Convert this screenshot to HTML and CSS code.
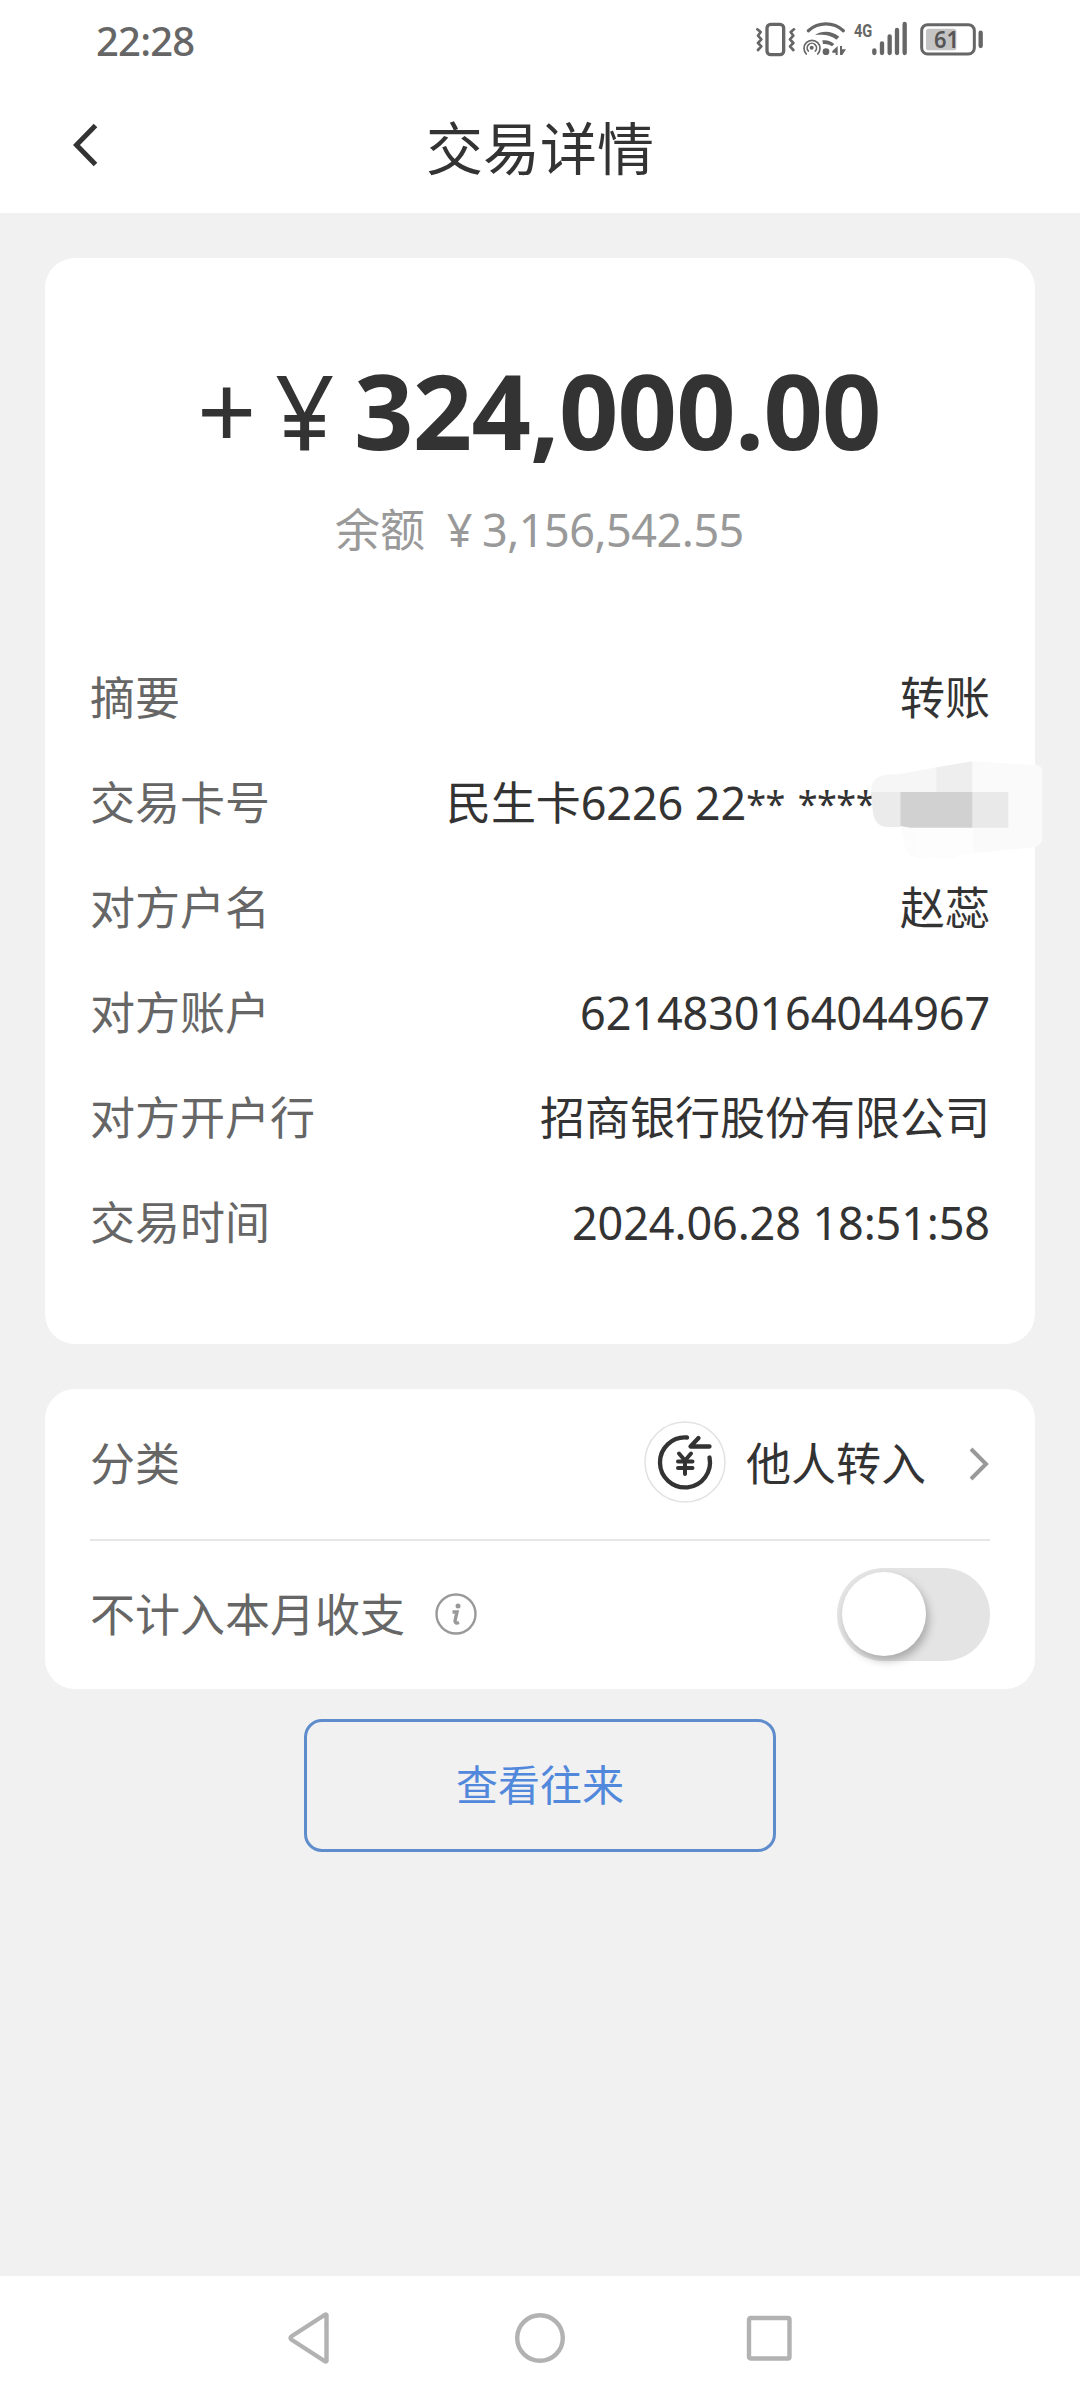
FILE: index.html
```html
<!DOCTYPE html>
<html lang="zh-CN">
<head>
<meta charset="utf-8">
<title>交易详情</title>
<link rel="stylesheet" href="styles.css">
</head>
<body>
<div class="screen">
  <header class="top">
    <div class="status">
      <span class="clock">22:28</span>
      <svg class="status-icons" viewBox="0 0 780 240" fill="none" stroke="#666" stroke-linecap="round" stroke-linejoin="round">
        <rect x="81" y="73" width="50" height="91" rx="11" stroke-width="10"/>
        <path d="M52 88l10 8-8 11 10 11-10 11 10 10-10 11M162 88l-10 8 8 11-10 11 10 11-10 10 10 11" stroke-width="8"/>
        <path d="M205 92C236 65 280 65 310 92" stroke-width="10"/>
        <path d="M225 105c22-15 50-13 73 5l-9 9c-19-14-37-16-64-14z" fill="#666" stroke="none"/>
        <path d="M247 121c14-2 26 2 36 11l-7 7c-9-6-17-8-27-7z" fill="#666" stroke="none"/>
        <circle cx="258" cy="155" r="10" fill="#666" stroke="none"/>
        <path d="M199 162a24 24 0 1 1 34 0M205 153a14 14 0 1 1 21 0" stroke-width="5"/>
        <circle cx="215" cy="143" r="6" fill="#666" stroke="none"/>
        <path d="M293 138v27h-6v-7h-10v-5zM300 138h6v10h12l-11 17h-7z" fill="#666" stroke="none"/>
        <text class="network" x="342" y="110" textLength="55" lengthAdjust="spacingAndGlyphs">4G</text>
        <path d="M403 151v8M426 130v29M449 109v50M471 90v69M494 72v87" stroke-width="13"/>
        <rect x="545" y="74" width="158" height="88" rx="18" stroke-width="9"/>
        <rect x="558" y="86" width="91" height="65" rx="8" fill="#c4c4c4" stroke="none"/>
        <text class="battery" x="582" y="145" textLength="75" lengthAdjust="spacingAndGlyphs">61</text>
        <path d="M722 98v40" stroke-width="13"/>
      </svg>
    </div>
    <div class="titlebar">
      <svg class="back" viewBox="0 0 28 46" fill="none" stroke="#333" stroke-width="5"><path d="M24.500 3.500L5.500 23l19 19.500"/></svg>
      <h1 class="title">交易详情</h1>
    </div>
  </header>

  <main class="content">
    <section class="card detail">
      <div class="amount"><span class="plus">+</span><span class="yen">¥</span><b class="figure">324,000.00</b></div>
      <div class="balance"><span>余额</span><span class="balance-yen">¥</span><span class="balance-figure">3,156,542.55</span></div>
      <dl class="rows">
        <div class="row"><dt>摘要</dt><dd>转账</dd></div>
        <div class="row masked">
          <dt>交易卡号</dt><dd>民生卡6226 22<span class="stars">** ****</span></dd>
          <svg class="mosaic" viewBox="920 360 540 300">
            <path d="M1020 555h170V655h-100q-60 0-60-60z" fill="#fcfcfc"/>
            <path d="M1237 364L1425 375q21 0 21 20V600q-8 22-30 22L1237 640z" fill="#fafafa"/>
            <path d="M1060 560h177v80l-120 15q-57 0-57-40z" fill="#fdfdfd"/>
            <path d="M932 456q0-50 50-52l38-2 108-20v74z" fill="#f6f6f6"/>
            <path d="M1128 382l108-18v92h-108z" fill="#eee"/>
            <path d="M932 456h88v105h-38q-40 0-45-50z" fill="#ebebeb"/>
            <path d="M1020 456h217v107H1050l-30-5z" fill="#d1d1d1"/>
            <path d="M1237 456h107v107h-107z" fill="#e9e9e9"/>
          </svg>
        </div>
        <div class="row"><dt>对方户名</dt><dd>赵蕊</dd></div>
        <div class="row"><dt>对方账户</dt><dd class="digits">6214830164044967</dd></div>
        <div class="row"><dt>对方开户行</dt><dd>招商银行股份有限公司</dd></div>
        <div class="row"><dt>交易时间</dt><dd class="digits">2024.06.28 18:51:58</dd></div>
      </dl>
    </section>

    <section class="card options">
      <div class="option">
        <span class="label">分类</span>
        <svg class="category-icon" viewBox="0 0 82 82" fill="none" stroke="#333" stroke-width="4.300" stroke-linecap="round" stroke-linejoin="round">
          <circle cx="41" cy="41" r="40" fill="#fff" stroke="#e2e2e2" stroke-width="1.500"/>
          <path d="M43 16.500A25 25 0 1 0 65.500 36.500"/>
          <path d="M54.500 17l-8 8.500H65.500"/>
          <path d="M35 32.500l6 7 6-7M34 40.500h14.500M34 47h14.500M41 40v13" stroke-width="4"/>
        </svg>
        <span class="value">他人转入</span>
        <svg class="chevron" viewBox="0 0 22 36" fill="none" stroke="#999" stroke-width="4"><path d="M3 3l15 15L3 33"/></svg>
      </div>
      <div class="option">
        <span class="label">不计入本月收支</span>
        <svg class="info" viewBox="0 0 42 42" fill="none" stroke="#999">
          <circle cx="21" cy="21" r="19.500" stroke-width="2.400"/>
          <circle cx="23" cy="13" r="2.500" fill="#999" stroke="none"/>
          <path d="M17.500 19h4.500l-2 9q0 3 4 1.500" stroke-width="3.400"/>
        </svg>
        <span class="toggle"><span class="knob"></span></span>
      </div>
    </section>
    <button class="history">查看往来</button>
  </main>

  <nav class="system-nav">
    <svg viewBox="0 0 52 52"><path d="M41.500 3v46Q41 50 39.500 49L7 28Q4 26 7 24L39.500 3Q41 2 41.500 3z"/></svg>
    <svg viewBox="0 0 52 52"><circle cx="26" cy="26" r="22.800"/></svg>
    <svg viewBox="0 0 52 52"><rect x="6" y="6" width="40.500" height="40.500" rx="1.500"/></svg>
  </nav>
</div>
</body>
</html>
```

FILE: styles.css
```css
* { box-sizing: border-box; }
body, h1, dl, dd { margin: 0; }
body {
  font-family: "Noto Sans", "Noto Sans CJK SC", sans-serif;
  font-size: 45px;
  color: #333;
  background: #f1f1f1;
}
.screen { width: 1080px; height: 2400px; display: flex; flex-direction: column; }

.top { height: 213px; background: #fff; }
.status { height: 80px; display: flex; justify-content: space-between; padding: 0 80px 0 96px; }
.clock { font-size: 40px; line-height: 82px; letter-spacing: -0.8px; font-weight: 500; color: #666; }
.status-icons { width: 260px; height: 80px; }
.network { font: 700 54px "Roboto", sans-serif; fill: #666; stroke: none; }
.battery { font: 600 70px "Noto Sans", sans-serif; fill: #555; stroke: none; }
.titlebar { height: 133px; display: grid; grid-template-columns: 130px 1fr 130px; align-items: start; }
.back { width: 28px; height: 46px; margin: 42px 0 0 71px; }
.title { font-family: "Noto Sans CJK SC", sans-serif; font-size: 57px; font-weight: 400; line-height: 131px; text-align: center; }

.content { flex: 1; padding: 45px 45px 0; display: flex; flex-direction: column; }
.card { background: #fff; border-radius: 30px; padding: 0 45px; }
.detail { height: 1086px; padding-top: 87px; }
.amount { height: 130px; display: flex; font-size: 104px; line-height: 130px; padding-left: 107px; }
.plus { width: 78px; }
.yen { width: 79px; }
.figure { font-weight: 700; letter-spacing: -0.8px; }
.balance { height: 62px; margin-top: 24px; display: flex; line-height: 62px; color: #999; padding-left: 245px; }
.balance-yen { width: 45px; margin-left: 12px; text-align: center; }
.balance-figure { letter-spacing: -0.5px; }
.rows { padding-top: 84px; }
.row { height: 105px; display: flex; justify-content: space-between; line-height: 105px; white-space: nowrap; }
.row dt { color: #666; }
.masked { position: relative; }
.masked dd { width: 544px; letter-spacing: -0.1px; }
.stars { font-size: 36px; line-height: 1; letter-spacing: -0.5px; word-spacing: 4px; vertical-align: 3px; }
.mosaic { position: absolute; right: -57px; top: 10px; width: 180px; height: 100px; }
.digits { letter-spacing: -0.12px; }

.options { margin-top: 45px; height: 300px; }
.option { height: 150px; display: flex; align-items: center; }
.option + .option { border-top: 2px solid #e6e6e6; }
.label, .value { padding-bottom: 6px; }
.label { color: #666; margin-right: auto; }
.category-icon { width: 82px; height: 82px; margin: 0 20px 4px 0; }
.value { margin-right: 42px; }
.chevron { width: 22px; height: 36px; }
.info { width: 42px; height: 42px; margin: 0 auto 2px 30px; }
.option:has(.info) .label { margin-right: 0; }
.toggle { width: 153px; height: 93px; margin-bottom: 2px; border-radius: 47px; background: #e4e4e4; padding: 4px 5px; }
.knob { display: block; width: 84px; height: 84px; border-radius: 50%; background: #fff; box-shadow: 3px 5px 9px rgba(0, 0, 0, 0.25); }

.history {
  width: 472px; height: 133px; margin: 30px auto 0; padding: 0 0 6px;
  border: 3px solid #5f8dcb; border-radius: 18px; background: transparent;
  font: 42px "Noto Sans CJK SC", sans-serif; color: #5288dc;
}

.system-nav { height: 124px; background: #fff; display: flex; justify-content: center; gap: 177px; padding-top: 36px; }
.system-nav svg { width: 52px; height: 52px; fill: none; stroke: #b2b2b2; stroke-width: 4.4px; }
```
